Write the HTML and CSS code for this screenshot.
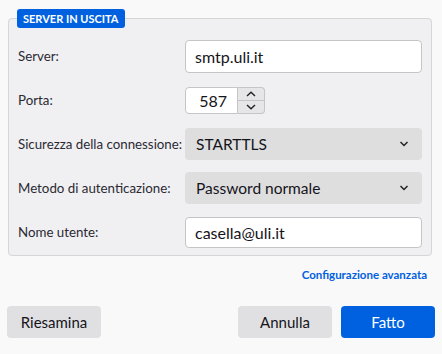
FILE: index.html
```html
<!DOCTYPE html>
<html lang="it">
<head>
  <meta charset="utf-8" />
  <title>Server in uscita</title>
  <link rel="stylesheet" href="styles.css">
</head>
<body>
  <main class="page">
    <!-- outgoing server group -->
    <fieldset class="group">
      <legend class="badge">Server in uscita</legend>

      <div class="row">
        <label for="srv">Server:</label>
        <input id="srv" class="field" type="text" value="smtp.uli.it">
      </div>

      <div class="row">
        <label for="port">Porta:</label>
        <div class="number">
          <input id="port" class="field num" type="text" value="587">
          <span class="spin">
            <span class="spin-btn"><svg width="10" height="6" viewBox="0 0 10 6"><path d="M1 5 5 1.2 9 5" fill="none" stroke="#222" stroke-width="1.4"/></svg></span>
            <span class="spin-btn"><svg width="10" height="6" viewBox="0 0 10 6"><path d="M1 1 5 4.8 9 1" fill="none" stroke="#222" stroke-width="1.4"/></svg></span>
          </span>
        </div>
      </div>

      <div class="row">
        <label>Sicurezza della connessione:</label>
        <div class="select">
          <span>STARTTLS</span>
          <svg width="10" height="6" viewBox="0 0 10 6"><path d="M1.5 1 5 4.5 8.5 1" fill="none" stroke="#222" stroke-width="1.5"/></svg>
        </div>
      </div>

      <div class="row">
        <label>Metodo di autenticazione:</label>
        <div class="select">
          <span>Password normale</span>
          <svg width="10" height="6" viewBox="0 0 10 6"><path d="M1.5 1 5 4.5 8.5 1" fill="none" stroke="#222" stroke-width="1.5"/></svg>
        </div>
      </div>

      <div class="row">
        <label for="user">Nome utente:</label>
        <input id="user" class="field" type="text" value="casella@uli.it">
      </div>
    </fieldset>

    <div class="adv">
      <a href="#">Configurazione avanzata</a>
    </div>

    <div class="actions">
      <button class="btn">Riesamina</button>
      <span class="grow"></span>
      <button class="btn">Annulla</button>
      <button class="btn primary">Fatto</button>
    </div>
  </main>
</body>
</html>
```

FILE: styles.css
```css
*,*::before,*::after{box-sizing:border-box;}

:root{
  --c-blue:#0061e0;
  --c-page:#f9f9fa;
  --c-group:#f0f0f2;
  --c-line:#d6d6d9;
  --c-gray:#e0e0e3;
  --c-text:#15141a;
}

body{
  margin:0;
  background:var(--c-page);
  color:var(--c-text);
  font-family:Lato,"Noto Sans",sans-serif;
  font-size:13.3px;
}

.page{padding:9px 7px 0;}

/* group box */
.group{
  margin:0 3px 0 1px;
  padding:0 9px 1px;
  border:1px solid var(--c-line);
  border-radius:4px;
  background:var(--c-group);
}
.badge{
  margin-left:-1px;
  padding:0 6px;
  height:19px;line-height:19px;
  background:var(--c-blue);color:#fff;
  border-radius:3px;
  font-size:11px;font-weight:700;
  text-transform:uppercase;
}
.row{
  display:grid;
  grid-template-columns:167px 1fr;
  align-items:center;
  height:44px;
  white-space:nowrap;
}
.row:first-of-type{margin-top:6px;}
.row label{color:#2b2a33;}

.field{
  height:33px;
  width:100%;
  padding:0 9px;
  border:1px solid #c5c5c8;
  border-radius:4px;
  background:#fff;
  font:inherit;font-size:16px;color:var(--c-text);
}
.row:last-child .field{height:31px;}

/* number + spinner */
.number{display:flex;height:27px;}
.field.num{
  width:53px;height:27px;
  border-radius:4px 0 0 4px;
  text-align:right;padding-right:10px;
}
.spin{
  display:flex;flex-direction:column;
  width:27px;
  border:1px solid #c5c5c8;border-left:0;
  border-radius:0 4px 4px 0;
  background:#e6e6e8;
}
.spin-btn{flex:1;display:grid;place-items:center;}
.spin-btn + .spin-btn{border-top:1px solid #c5c5c8;}

/* drop-downs */
.select{
  display:flex;align-items:center;justify-content:space-between;
  height:32px;
  padding:0 13px 0 11px;
  background:#dededf;
  border-radius:4px;
  font-size:15.5px;
}

.adv{
  display:flex;justify-content:flex-end;
  margin:12px 8px 0 0;
}
.adv a{
  color:var(--c-blue);
  font-size:11.5px;font-weight:700;
  text-decoration:none;
}

.actions{
  display:flex;gap:9px;
  margin-top:25px;
}
.grow{flex:1;}
.btn{
  width:94px;height:32px;
  border:0;border-radius:4px;
  background:var(--c-gray);color:var(--c-text);
  font:inherit;font-size:15px;
}
.btn.primary{background:var(--c-blue);color:#fff;}
```
